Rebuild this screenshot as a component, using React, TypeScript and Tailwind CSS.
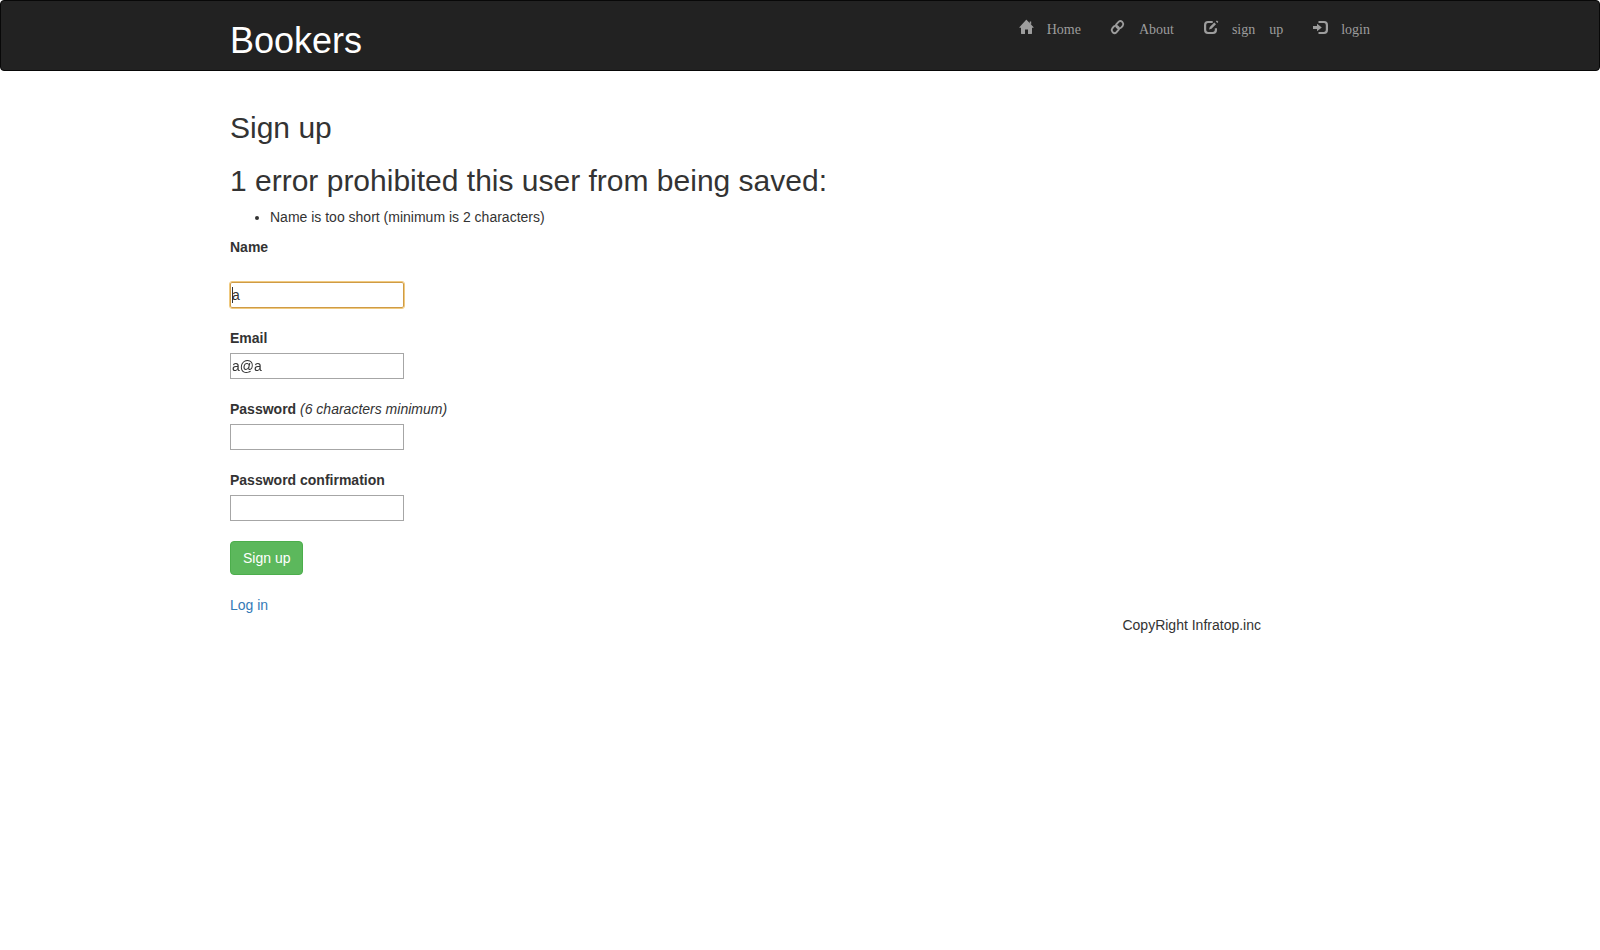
import type { InputHTMLAttributes, ReactNode } from "react";

function HomeIcon() {
  return (
    <svg viewBox="0 0 14 14" className="h-3.5 w-3.5 overflow-visible" fill="currentColor" aria-hidden="true">
      <path d="M7.500-.3 14.600 7.200q.2.500-.3.500H13V13.600q0 .4-.4.400H9V9.500H6V14H2.400q-.4 0-.4-.4V7.700H.7Q.2 7.700.4 7.200L7.200-.3q.15-.15.3 0zM10.700 1.500h1.500v3l-1.500-1.500z" />
    </svg>
  );
}

function LinkIcon() {
  return (
    <svg viewBox="0 0 14 14" className="h-3.5 w-3.5 overflow-visible" fill="none" stroke="currentColor" strokeWidth="1.900" aria-hidden="true">
      <path d="M8.700 8.300C9.400 8.300 9.900 8 10.300 7.500L11.700 5.800C12.600 4.700 12.600 3.600 11.700 2.500L11 1.700C10 .7 8.800.7 7.800 1.700L5.500 4.200C4.700 5.200 4.800 6.200 5.600 7L7.300 8.600" />
      <path d="M4.300 5.900C3.600 5.900 3.100 6.200 2.700 6.700L1.300 8.400C.4 9.500.4 10.600 1.300 11.700L2 12.500C3 13.500 4.200 13.500 5.200 12.500L7.500 10C8.300 9 8.200 8 7.400 7.200L5.700 5.600" />
    </svg>
  );
}

function EditIcon() {
  return (
    <svg viewBox="0 0 14 14" className="h-3.5 w-3.5 overflow-visible" aria-hidden="true">
      <path d="M8.700 2H4Q1.100 2 1.100 4.900V10.100Q1.100 13 4 13H9Q11.900 13 11.900 10.100V8.200" fill="none" stroke="currentColor" strokeWidth="2.200" />
      <path d="M5 9.500 5.800 7.100 10.300 2.600l1.700 1.700L7.500 8.800zM11.900 1.400 12.600.7q.3-.3.600 0l.9.900q.3.300 0 .6l-.7.700z" fill="currentColor" />
    </svg>
  );
}

function LoginIcon() {
  return (
    <svg viewBox="0 0 14 14" className="h-3.5 w-3.5 overflow-visible" aria-hidden="true">
      <path d="M5.500 2H11Q13.900 2 13.900 4.900V10.100Q13.900 13 11 13H5.500" fill="none" stroke="currentColor" strokeWidth="2.200" />
      <path d="M4 3.700 8.800 7.500 4 11.300V9H0V6H4z" fill="currentColor" />
    </svg>
  );
}

function NavLink({ icon, words }: { icon: ReactNode; words: string[] }) {
  return (
    <li>
      <a href="#" className="flex items-start gap-3.5 py-[19px] font-['Liberation_Serif',serif] text-sm leading-4 text-[#9d9d9d] hover:text-white">
        {icon}
        {words.map((word) => (
          <span key={word} className="pt-0.5">{word} </span>
        ))}
      </a>
    </li>
  );
}

type FieldProps = InputHTMLAttributes<HTMLInputElement> & { id: string; label: string; hint?: string; spaced?: boolean };

function Field({ id, label, hint, spaced, ...input }: FieldProps) {
  return (
    <div className="mb-5">
      <div className={spaced ? "mb-[25px]" : "mb-[5px]"}>
        <label htmlFor={id} className="font-bold">{label}</label>
        {hint && <em> {hint}</em>}
      </div>
      <div className="relative">
        <input
          id={id}
          {...input}
          className="peer block h-[26px] w-[174px] border border-[#a6a6a6] bg-white px-px caret-transparent focus:rounded-xs focus:border-[#cf9b45] focus:outline focus:outline-[#f0ca80]"
        />
        <span className="pointer-events-none absolute top-[5px] left-0.5 hidden h-4 w-px bg-[#333333] peer-focus:block" aria-hidden="true" />
      </div>
    </div>
  );
}

export default function App() {
  return (
    <div className="font-['Liberation_Sans',Arial,sans-serif] text-sm leading-5 text-[#333333]">
      <header className="mb-10 rounded-sm border border-[#080808] bg-[#222222]">
        <div className="mx-auto flex max-w-[1170px] items-start justify-between px-[15px]">
          <h1 className="pt-5 pb-[9px] text-4xl leading-10 text-white">Bookers</h1>
          <nav>
            <ul className="flex gap-[30px]">
              <NavLink icon={<HomeIcon />} words={["Home"]} />
              <NavLink icon={<LinkIcon />} words={["About"]} />
              <NavLink icon={<EditIcon />} words={["sign", "up"]} />
              <NavLink icon={<LoginIcon />} words={["login"]} />
            </ul>
          </nav>
        </div>
      </header>

      <main className="mx-auto max-w-[1170px] px-[15px]">
        <h2 className="mb-5 text-3xl leading-[33px]">Sign up</h2>
        <form onSubmit={(event) => event.preventDefault()}>
          <h2 className="mb-2.5 text-3xl leading-[33px]">1 error prohibited this user from being saved:</h2>
          <ul className="mb-2.5 list-disc pl-10">
            <li>Name is too short (minimum is 2 characters)</li>
          </ul>
          <Field id="name" label="Name" type="text" defaultValue="a" autoFocus spaced />
          <Field id="email" label="Email" type="email" defaultValue="a@a" />
          <Field id="password" label="Password" hint="(6 characters minimum)" type="password" />
          <Field id="password-confirmation" label="Password confirmation" type="password" />
          <button type="submit" className="mb-5 rounded-sm border border-[#4cae4c] bg-[#5cb85c] px-3 py-1.5 text-white">
            Sign up
          </button>
        </form>
        <a href="#" className="text-[#337ab7]">Log in</a>
      </main>

      <footer className="mx-auto flex max-w-[1170px] justify-end pr-[124px]">
        <p>CopyRight Infratop.inc</p>
      </footer>
    </div>
  );
}
